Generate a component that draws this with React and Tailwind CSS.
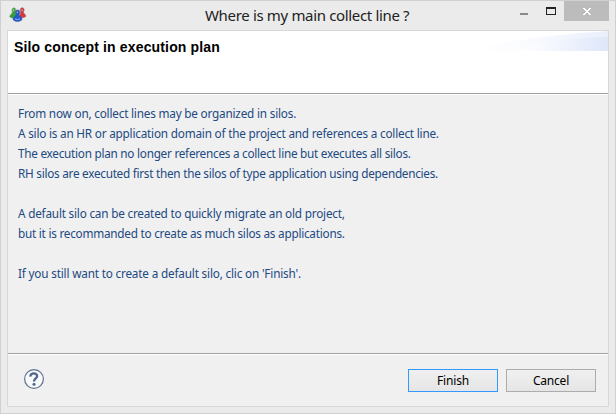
import React from "react";

const lines = [
  ["From now on, collect lines may be organized in silos.", "tracking-[-0.2px]"],
  ["A silo is an HR or application domain of the project and references a collect line.", "tracking-[-0.207px]"],
  ["The execution plan no longer references a collect line but executes all silos.", "tracking-[-0.257px]"],
  ["RH silos are executed first then the silos of type application using dependencies.", "tracking-[-0.262px]"],
  ["", ""],
  ["A default silo can be created to quickly migrate an old project,", "tracking-[-0.205px]"],
  ["but it is recommanded to create as much silos as applications.", "tracking-[-0.24px]"],
  ["", ""],
  ["If you still want to create a default silo, clic on 'Finish'.", "tracking-[-0.18px]"],
];

function AppIcon() {
  return (
    <svg width="18" height="16" viewBox="0 0 18 16" className="block">
      <path d="M4.500 1C7 .5 7 3.500 5.800 5C6.300 7 7.500 8 7.500 10C5.500 11.500 2 11.300 .7 9.700C1 7.500 3.200 7 3.500 5C2.600 3.500 2.800 1.500 4.500 1Z" fill="#2fa331" stroke="#6a9a6c" strokeWidth=".7" />
      <path d="M13 .8C15.500 .8 15.500 3.500 14.300 5C14.800 7 17 7.500 16.800 9.300C15.500 11 12 11 10.200 9.500C10.700 7.500 12 6.500 11.800 5C10.800 3.500 11 1 13 .8Z" fill="#d8363c" stroke="#a46468" strokeWidth=".7" />
      <path d="M8.600 3C11 3 11.300 6 10 7.500C10.200 9.500 13.300 9.800 13 12.500C11 15 6 15 4 12.500C4 9.800 7 9.500 7.200 7.500C6 6 6.200 3 8.600 3Z" fill="#2458cb" stroke="#34509a" strokeWidth=".7" />
      <path d="M6 11.700Q8.500 13.500 11 11.700" fill="none" stroke="#6fa4f4" strokeWidth="1.200" />
      <path d="M4.500 2.500v1.500M13 2.500v1.500M8.300 4.500v1.500" stroke="#b5dfc0" />
    </svg>
  );
}

function TitleBar() {
  return (
    <div className="flex h-[29px] shrink-0 items-start">
      <div className="w-[191px] pl-[8px] pt-[6px]"><AppIcon /></div>
      <h1 className="w-[222px] whitespace-nowrap pl-[13px] text-[15px] leading-[29px] tracking-[-0.34px] text-[#222]">Where is my main collect line ?</h1>
      <div className="flex flex-1 justify-end">
        <svg width="46" height="20" viewBox="0 0 46 20" shapeRendering="crispEdges">
          <path d="M2 12h8v2H2z" fill="#8a8a8a" />
          <path d="M28 6h10v8H28z" fill="#222" />
          <path d="M29 8h8v5h-8z" fill="#ebebeb" />
        </svg>
        <div className="mr-[6px] flex h-[20px] w-[45px] items-center justify-center bg-[#bcbcbc]">
          <svg width="8" height="7" viewBox="0 0 8 7" className="mt-px" shapeRendering="crispEdges">
            <path d="M0 0h2v1h1v1h2V1h1V0h2v1H7v1H6v1H5v1h1v1h1v1h1v1H6V6H5V5H3v1H2v1H0V6h1V5h1V4h1V3H2V2H1V1H0z" fill="#fff" />
          </svg>
        </div>
      </div>
    </div>
  );
}

export default function App() {
  return (
    <main className="flex h-[414px] w-[616px] flex-col overflow-hidden border border-[#d0d0d0] bg-[#ebebeb] font-['Noto_Sans',sans-serif]">
      <TitleBar />
      <section className="ml-[6px] flex h-[377px] w-[602px] flex-col border border-[#d8d8d8] bg-[#f0f0f0]">
        <header className="flex h-[62px] shrink-0 justify-between bg-white">
          <h2 className="whitespace-nowrap pl-[6px] pt-[7px] font-['Liberation_Sans',sans-serif] text-[14px] font-bold leading-[18px] tracking-[0.15px] text-black">Silo concept in execution plan</h2>
          <svg width="140" height="20" viewBox="0 0 140 20">
            <defs>
              <linearGradient id="sweep">
                <stop stopColor="#fff" />
                <stop offset=".35" stopColor="#fafbff" />
                <stop offset="1" stopColor="#dce4f8" />
              </linearGradient>
            </defs>
            <path d="M0 20Q55 5 140 0V20Z" fill="url(#sweep)" opacity=".6" />
            <path d="M35 20Q75 8 140 6V20Z" fill="url(#sweep)" opacity=".8" />
          </svg>
        </header>
        <div className="h-[2px] shrink-0 border-b border-t border-b-white border-t-[#a0a0a0]" />
        <div className="h-[258px] shrink-0 pl-[10px] pt-[8px] text-[11.75px] leading-[20px] text-[#1c4a82]">
          {lines.map(([text, tracking], i) => (
            <p key={i} className="h-[20px] whitespace-nowrap"><span className={tracking}>{text}</span></p>
          ))}
        </div>
        <div className="h-[2px] shrink-0 border-b border-t border-b-white border-t-[#a0a0a0]" />
        <footer className="flex flex-1 items-start pl-[15px] pt-[14px]">
          <svg width="22" height="22" viewBox="0 0 22 22">
            <circle cx="11" cy="10" r="9.400" fill="#f8f8fa" stroke="#5d7193" strokeWidth="1.200" />
            <path d="M7.400 7.600C7.200 3.300 14.300 3.500 14.100 7.200C14 9.600 11 9.400 11 12.600" fill="none" stroke="#4f668d" strokeWidth="2.400" />
            <circle cx="11" cy="15.200" r="1.500" fill="#4f668d" />
          </svg>
          <div className="ml-auto mr-[12px] flex gap-[8px] text-[12px] tracking-[-0.2px] text-black">
            <button className="h-[23px] w-[90px] border border-[#3399ff] bg-linear-to-b from-[#f0f0f0] to-[#e5e5e5] leading-[21px]">Finish</button>
            <button className="h-[23px] w-[90px] border border-[#acacac] bg-linear-to-b from-[#f0f0f0] to-[#e5e5e5] leading-[21px]">Cancel</button>
          </div>
        </footer>
      </section>
    </main>
  );
}
